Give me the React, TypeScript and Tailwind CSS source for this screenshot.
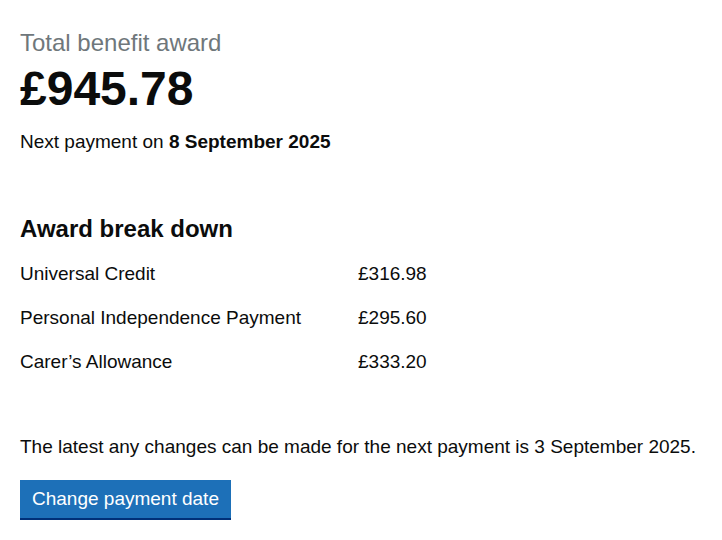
export default function App() {
  return (
    <div className="min-h-[540px] w-[722px] bg-white px-5 pt-[28px] text-[#0b0c0c]" style={{ fontFamily: '"Liberation Sans", Arial, sans-serif' }}>
      <div className="text-[24px] leading-[30px] text-[#6f777b]">Total benefit award</div>
      <div className="mt-[6px] text-[48px] font-bold leading-[50px]">£945.78</div>
      <div className="mt-[15px] text-[19px] leading-[25px]">
        Next payment on <span className="font-bold">8 September 2025</span>
      </div>
      <h2 className="mt-[60px] text-[24px] font-bold leading-[30px]">Award break down</h2>
      <div className="mt-[17px] flex flex-col gap-[19px] text-[19px] leading-[25px]">
        <div className="flex"><span className="w-[338px]">Universal Credit</span><span>£316.98</span></div>
        <div className="flex"><span className="w-[338px]">Personal Independence Payment</span><span>£295.60</span></div>
        <div className="flex"><span className="w-[338px]">Carer’s Allowance</span><span>£333.20</span></div>
      </div>
      <p className="mt-[60px] text-[19px] leading-[25px]">
        The latest any changes can be made for the next payment is 3 September 2025.
      </p>
      <button className="mt-[21px] h-[38px] bg-[#1d70b8] px-[12px] text-[19px] leading-[34px] text-white shadow-[0_2px_0_#003078]">
        Change payment date
      </button>
    </div>
  );
}
